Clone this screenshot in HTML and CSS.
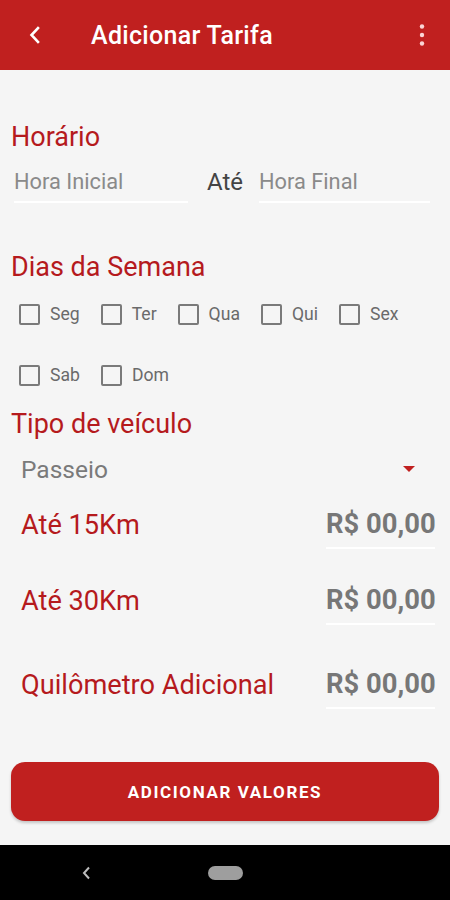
FILE: index.html
```html
<!DOCTYPE html>
<html lang="pt-BR">
<head>
    <meta charset="UTF-8">
    <meta name="viewport" content="width=device-width, initial-scale=1.0">
    <title>Adicionar Tarifa</title>
    <link rel="stylesheet" href="styles.css">
</head>
<body>
    <header class="appbar">
        <svg class="appbar-back" width="14" height="18" viewBox="0 0 14 18">
            <path d="M10 2 L3.5 9 L10 16" fill="none" stroke="#fff" stroke-width="2.6" stroke-linecap="square"/>
        </svg>
        <h1 class="appbar-title">Adicionar Tarifa</h1>
        <svg class="appbar-menu" width="8" height="24" viewBox="0 0 8 24">
            <circle cx="4" cy="3.5" r="2.2" fill="#fbd5d5"/>
            <circle cx="4" cy="12" r="2.2" fill="#fbd5d5"/>
            <circle cx="4" cy="20.5" r="2.2" fill="#fbd5d5"/>
        </svg>
    </header>

    <main class="content">
        <h2 class="section-title title-horario">Horário</h2>
        <div class="time-row">
            <div class="field field-start">Hora Inicial</div>
            <span class="time-sep">Até</span>
            <div class="field field-end">Hora Final</div>
        </div>

        <h2 class="section-title title-dias">Dias da Semana</h2>
        <div class="days-row">
            <label class="day"><span class="box"></span>Seg</label>
            <label class="day"><span class="box"></span>Ter</label>
            <label class="day"><span class="box"></span>Qua</label>
            <label class="day"><span class="box"></span>Qui</label>
            <label class="day"><span class="box"></span>Sex</label>
        </div>
        <div class="days-row days-row-2">
            <label class="day"><span class="box"></span>Sab</label>
            <label class="day"><span class="box"></span>Dom</label>
        </div>

        <h2 class="section-title title-tipo">Tipo de veículo</h2>
        <div class="select">
            <span>Passeio</span>
            <svg width="12" height="6" viewBox="0 0 12 6"><path d="M0 0 H12 L6 6 Z" fill="#c0201f"/></svg>
        </div>

        <div class="price-row row-15">
            <span class="price-label">Até 15Km</span>
            <span class="price-value">R$ 00,00</span>
        </div>
        <div class="price-row row-30">
            <span class="price-label">Até 30Km</span>
            <span class="price-value">R$ 00,00</span>
        </div>
        <div class="price-row row-km">
            <span class="price-label">Quilômetro Adicional</span>
            <span class="price-value">R$ 00,00</span>
        </div>

        <button class="btn-add">ADICIONAR VALORES</button>
    </main>

    <nav class="navbar">
        <svg class="nav-back" width="10" height="14" viewBox="0 0 10 14">
            <path d="M7 1.5 L2 7 L7 12.5" fill="none" stroke="#bdbdbd" stroke-width="2"/>
        </svg>
        <span class="nav-home"></span>
    </nav>
</body>
</html>
```

FILE: styles.css
```css
* {
    margin: 0;
    padding: 0;
    box-sizing: border-box;
    font-family: Roboto, 'Noto Sans', sans-serif;
}

body {
    width: 450px;
    height: 900px;
    background: #f5f5f5;
    display: flex;
    flex-direction: column;
    overflow: hidden;
}

.appbar {
    height: 70px;
    background: #c0201f;
    display: flex;
    align-items: center;
    padding: 0 24px 0 28px;
    flex-shrink: 0;
}

.appbar-back {
    display: block;
}

.appbar-title {
    margin-left: 49px;
    color: #ffffff;
    font-size: 25px;
    font-weight: 500;
    letter-spacing: 0.3px;
    flex: 1;
}

.appbar-menu {
    display: block;
}

.content {
    flex: 1;
    padding: 0 11px;
}

.section-title {
    color: #b51a1d;
    font-size: 27px;
    font-weight: 400;
    line-height: 30px;
}

.title-horario {
    margin-top: 52px;
}

.time-row {
    display: flex;
    align-items: flex-start;
    margin-top: 8px;
    padding-right: 9px;
}

.field {
    height: 43px;
    padding-top: 3px;
    line-height: 38px;
    font-size: 21.8px;
    color: #8a8a8a;
    border-bottom: 2px solid #ffffff;
}

.field-start {
    width: 174px;
    margin-left: 3px;
}

.time-sep {
    margin-left: 19px;
    line-height: 44px;
    font-size: 24px;
    color: #444444;
}

.field-end {
    flex: 1;
    margin-left: 16px;
}

.title-dias {
    margin-top: 48px;
}

.days-row {
    display: flex;
    align-items: center;
    gap: 21px;
    height: 40px;
    margin-top: 12px;
    padding-left: 8px;
}

.days-row-2 {
    margin-top: 21px;
}

.day {
    display: flex;
    align-items: center;
    gap: 10px;
    font-size: 17.6px;
    color: #6a6a6a;
}

.box {
    width: 21px;
    height: 21px;
    border: 2px solid #7a7a7a;
    border-radius: 2px;
}

.title-tipo {
    margin-top: 14px;
}

.select {
    display: flex;
    align-items: center;
    justify-content: space-between;
    height: 40px;
    margin-top: 10px;
    padding: 0 24px 0 10px;
    font-size: 24.5px;
    color: #7a7a7a;
}

.price-row {
    display: flex;
    justify-content: space-between;
    align-items: flex-start;
    padding: 0 4px 0 10px;
}

.row-15 {
    margin-top: 12px;
}

.row-30 {
    margin-top: 28px;
}

.row-km {
    margin-top: 36px;
}

.price-label {
    font-size: 27.2px;
    line-height: 48px;
    color: #b51a1d;
}

.price-value {
    width: 109px;
    text-align: right;
    font-size: 27.4px;
    font-weight: 700;
    line-height: 46px;
    color: #777777;
    border-bottom: 2px solid #ffffff;
    white-space: nowrap;
}

.btn-add {
    display: block;
    width: 100%;
    height: 59px;
    margin-top: 53px;
    border: none;
    border-radius: 14px;
    background: #c0201f;
    color: #ffffff;
    font-size: 17px;
    font-weight: 700;
    letter-spacing: 1.6px;
    box-shadow: 0 2px 3px rgba(0, 0, 0, 0.2);
}

.navbar {
    height: 55px;
    flex-shrink: 0;
    background: #000000;
    display: flex;
    align-items: center;
    padding-left: 82px;
}

.nav-back {
    display: block;
}

.nav-home {
    display: block;
    width: 35px;
    height: 14px;
    margin-left: 116px;
    border-radius: 7px;
    background: #9e9e9e;
}
```
